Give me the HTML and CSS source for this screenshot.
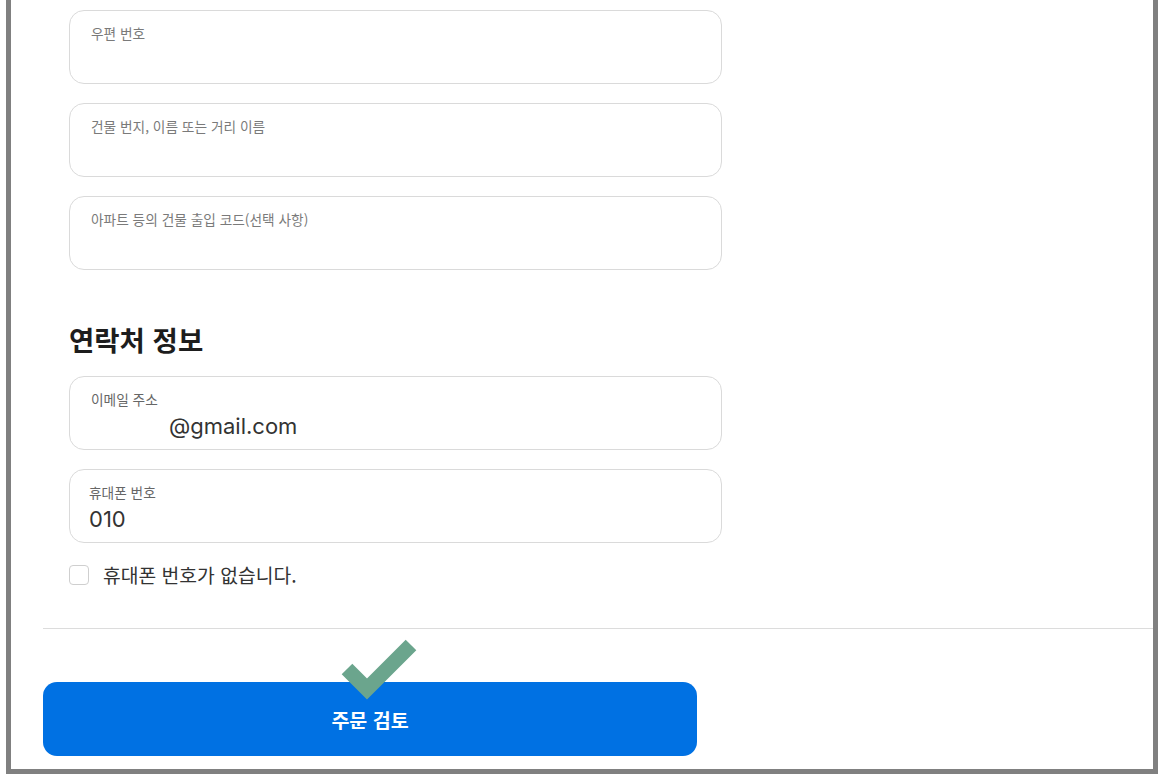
FILE: index.html
```html
<!DOCTYPE html>
<html lang="ko">
<head>
<meta charset="utf-8">
<title>배송 및 연락처 정보</title>
<link rel="stylesheet" href="styles.css">
</head>
<body>
<div class="frame">
  <div class="content">
    <div class="group">
      <div class="field"><span class="label light">우편 번호</span></div>
      <div class="field"><span class="label light">건물 번지, 이름 또는 거리 이름</span></div>
      <div class="field"><span class="label light">아파트 등의 건물 출입 코드(선택 사항)</span></div>
    </div>
    <h2 class="heading">연락처 정보</h2>
    <div class="group">
      <div class="field"><span class="label">이메일 주소</span><span class="value"><span class="local"></span>@gmail.com</span></div>
      <div class="field phone"><span class="label">휴대폰 번호</span><span class="value">010</span></div>
    </div>
    <label class="check"><span class="box"></span><span class="check-text">휴대폰 번호가 없습니다.</span></label>
    <div class="divider"></div>
    <button class="submit" type="button">주문 검토</button>
  </div>
  <svg class="tick" width="90" height="75" viewBox="0 0 90 75" aria-hidden="true">
    <polyline points="9,38 29,58 73,14" fill="none" stroke="#6ba58d" stroke-width="15" stroke-linejoin="miter" stroke-linecap="butt"/>
  </svg>
</div>
</body>
</html>
```

FILE: styles.css
```css
* { box-sizing: border-box; }

html, body {
  margin: 0;
  padding: 0;
  background: #ffffff;
}

body {
  font-family: Inter, "Noto Sans CJK KR", sans-serif;
  color: #333333;
}

.frame {
  position: relative;
  margin-left: 6px;
  width: 1152px;
  height: 774px;
  border: 5px solid #808080;
  border-top: 0;
  background: #ffffff;
}

.content {
  padding: 10px 0 0 32px;
}

.group {
  margin-left: 26px;
  width: 653px;
  display: flex;
  flex-direction: column;
  gap: 19px;
}

.field {
  height: 74px;
  border: 1px solid #dadada;
  border-radius: 15px;
  padding: 13px 20px 0 21px;
  display: flex;
  flex-direction: column;
}

.field.phone {
  padding-left: 19px;
}

.label {
  font-family: "Noto Sans CJK KR", sans-serif;
  font-size: 13.7px;
  line-height: 18px;
  color: #666666;
}

.label.light {
  color: #7a7a7a;
}

.value {
  margin-top: 4px;
  font-size: 22px;
  line-height: 28px;
  color: #333333;
}

.local {
  display: inline-block;
  width: 78px;
}

.heading {
  margin: 52px 0 20px 26px;
  font-family: "Noto Sans CJK KR", sans-serif;
  font-size: 27.5px;
  line-height: 34px;
  font-weight: 700;
  color: #1d1d1d;
}

.check {
  margin: 22px 0 0 26px;
  height: 20px;
  display: flex;
  align-items: center;
  gap: 14px;
}

.box {
  width: 20px;
  height: 20px;
  border: 1px solid #cfcfcf;
  border-radius: 4px;
  background: #ffffff;
}

.check-text {
  font-family: "Noto Sans CJK KR", sans-serif;
  font-size: 19.3px;
  line-height: 20px;
  color: #333333;
}

.divider {
  margin-top: 43px;
  height: 1px;
  background: #dcdcdc;
}

.submit {
  display: block;
  margin-top: 53px;
  width: 654px;
  height: 74px;
  border: 0;
  border-radius: 14px;
  background: #0071e3;
  color: #ffffff;
  font-family: "Noto Sans CJK KR", sans-serif;
  font-size: 19.5px;
  font-weight: 700;
  padding: 0;
}

.tick {
  position: absolute;
  left: 327px;
  top: 631px;
}
```
